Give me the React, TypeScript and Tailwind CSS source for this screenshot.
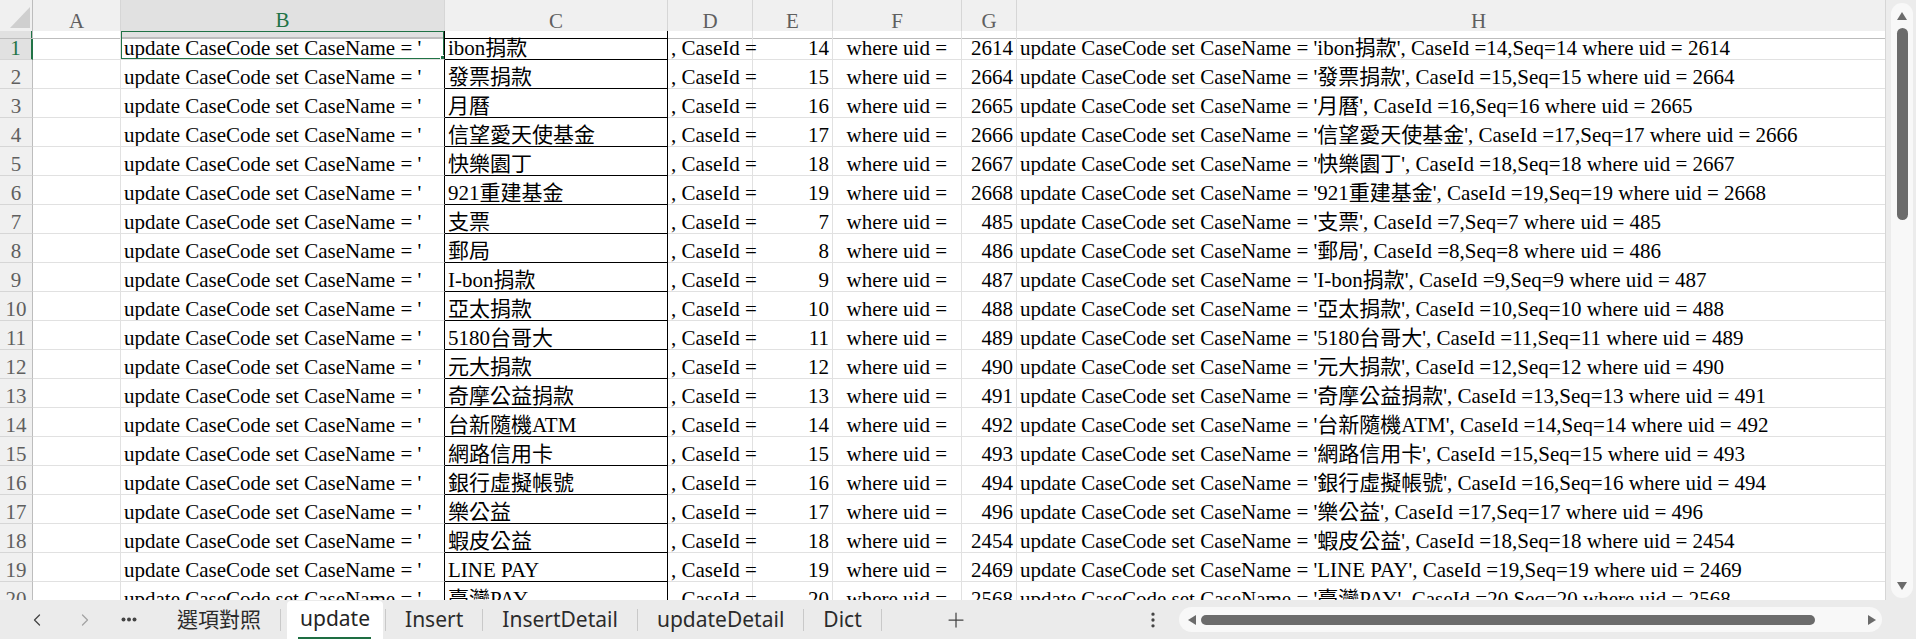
import React from "react";
import { ChevronLeft, ChevronRight, Plus, EllipsisVertical } from "lucide-react";

const data: [string, number, number][] = [
  ["ibon捐款", 14, 2614],
  ["發票捐款", 15, 2664],
  ["月曆", 16, 2665],
  ["信望愛天使基金", 17, 2666],
  ["快樂園丁", 18, 2667],
  ["921重建基金", 19, 2668],
  ["支票", 7, 485],
  ["郵局", 8, 486],
  ["I-bon捐款", 9, 487],
  ["亞太捐款", 10, 488],
  ["5180台哥大", 11, 489],
  ["元大捐款", 12, 490],
  ["奇摩公益捐款", 13, 491],
  ["台新隨機ATM", 14, 492],
  ["網路信用卡", 15, 493],
  ["銀行虛擬帳號", 16, 494],
  ["樂公益", 17, 496],
  ["蝦皮公益", 18, 2454],
  ["LINE PAY", 19, 2469],
  ["臺灣PAY", 20, 2568],
];

const GRID = "grid grid-cols-[33px_88px_324px_223px_85px_80px_129px_55px_924px]";
const BASE = "flex items-end whitespace-pre border-r border-b border-[#e1e1e1] leading-[22px] px-[3px]";
const CELL = `${BASE} overflow-hidden`;
const HEAD = "flex items-center justify-center border-r border-b border-r-[#d6d6d6] border-b-[#bdbdbd] pt-[5px] text-[#5f5f5f]";

function SheetTab({ label, active }: { label: string; active?: boolean }) {
  return (
    <div className={active ? "relative h-full flex items-center px-[13px] ml-[6px] mr-[2px] bg-white rounded-t-[4px] mt-[2px]" : "h-full flex items-center px-[19px]"}>
      <span className={active ? "text-[#242424] -mt-[4px]" : "text-[#2b2b2b]"}>{label}</span>
      {active && <div className="absolute bottom-0 left-[11px] right-[12px] h-[3px] bg-[#1e6e42]" />}
    </div>
  );
}

function Sep() {
  return <div className="w-px h-[22px] bg-[#c9c9c9]" />;
}

export default function App() {
  return (
    <div className="w-[1916px] h-[639px] overflow-hidden bg-[#ececec] flex flex-col" style={{ fontFamily: '"Liberation Serif", "Noto Sans CJK TC", serif' }}>
      <div className="h-[600px] flex">
        <div className="w-[1886px] overflow-hidden bg-white border-r border-[#d6d6d6] text-[21px] text-black">
          {/* header */}
          <div className={`${GRID} h-[31px] bg-[#f0f0f0]`}>
            <div className="relative border-r border-b border-r-[#bdbdbd] border-b-[#bdbdbd]">
              <svg className="absolute left-[10px] top-[7px]" width="20" height="21" viewBox="0 0 20 21">
                <polygon points="20,0 20,21 0,21" fill="#cfcfcf" />
              </svg>
            </div>
            <div className={HEAD}>A</div>
            <div className={`${HEAD} bg-[#e1e1e1] text-[#217346] border-b-2 border-b-[#217346]`}>B</div>
            <div className={`${HEAD} border-b-black`}>C</div>
            <div className={HEAD}>D</div>
            <div className={HEAD}>E</div>
            <div className={HEAD}>F</div>
            <div className={HEAD}>G</div>
            <div className={HEAD}>H</div>
          </div>
          {data.map(([name, id, uid], i) => {
            const first = i === 0;
            return (
              <div key={i} className={`${GRID} h-[29px]`}>
                <div className={`flex items-end justify-center leading-[22px] border-b border-b-[#d6d6d6] text-[#5f5f5f] ${first ? "bg-[#e1e1e1] text-[#217346] border-r-2 border-r-[#217346]" : "bg-[#f0f0f0] border-r border-r-[#bdbdbd]"}`}>
                  {i + 1}
                </div>
                <div className={CELL}></div>
                <div className={`${CELL} relative border-r-black`}>
                  {"update CaseCode set CaseName = '"}
                  {first && (
                    <>
                      <div className="absolute left-[-1px] top-[-1px] right-[-1px] bottom-[-1px] border-2 border-[#217346]" />
                      <div className="absolute right-[-3px] bottom-[-3px] w-[7px] h-[7px] bg-[#217346] border border-white" />
                    </>
                  )}
                </div>
                <div className={`${CELL} border-r-black border-b-black`}>{name}</div>
                <div className={`${BASE} relative z-10`}>{", CaseId ="}</div>
                <div className={`${CELL} justify-end`}>{id}</div>
                <div className={CELL}>{"  where uid ="}</div>
                <div className={`${CELL} justify-end`}>{uid}</div>
                <div className={CELL}>{`update CaseCode set CaseName = '${name}', CaseId =${id},Seq=${id} where uid = ${uid}`}</div>
              </div>
            );
          })}
        </div>
        {/* vertical scrollbar */}
        <div className="w-[30px] h-full pl-[5px] pt-[3px] pb-[2px]">
          <div className="w-[22px] h-full rounded-full bg-[#f8f8f8] flex flex-col items-center">
            <svg className="mt-[9px]" width="10" height="8" viewBox="0 0 10 8">
              <polygon points="5,0 10,8 0,8" fill="#6b6b6b" />
            </svg>
            <div className="mt-[8px] w-[11px] h-[192px] rounded-full bg-[#6b6b6b]" />
            <div className="flex-1" />
            <svg className="mb-[8px]" width="10" height="8" viewBox="0 0 10 8">
              <polygon points="0,0 10,0 5,8" fill="#6b6b6b" />
            </svg>
          </div>
        </div>
      </div>
      {/* bottom bar */}
      <div className="h-[39px] flex items-center bg-[#ebebeb] text-[21px]" style={{ fontFamily: '"Noto Sans", "Noto Sans CJK TC", sans-serif' }}>
        <div className="w-[13px]" />
        <div className="w-[48px] flex justify-center text-[#444]"><ChevronLeft size={20} strokeWidth={1.5} /></div>
        <div className="w-[48px] flex justify-center text-[#a3a3a3]"><ChevronRight size={20} strokeWidth={1.5} /></div>
        <div className="w-[40px] flex justify-center">
          <svg width="16" height="5" viewBox="0 0 16 5">
            <circle cx="2.5" cy="2.5" r="2" fill="#444" />
            <circle cx="8" cy="2.5" r="2" fill="#444" />
            <circle cx="13.5" cy="2.5" r="2" fill="#444" />
          </svg>
        </div>
        <div className="w-[9px]" />
        <SheetTab label="選項對照" />
        <Sep />
        <SheetTab label="update" active />
        <Sep />
        <SheetTab label="Insert" />
        <Sep />
        <SheetTab label="InsertDetail" />
        <Sep />
        <SheetTab label="updateDetail" />
        <Sep />
        <SheetTab label="Dict" />
        <Sep />
        <div className="ml-[54px] w-[40px] flex justify-center text-[#444]"><Plus size={24} strokeWidth={1.25} /></div>
        <div className="flex-1" />
        <div className="w-[24px] flex justify-center text-[#444]"><EllipsisVertical size={20} strokeWidth={2} /></div>
        <div className="ml-[14px] w-[703px] h-[25px] rounded-full bg-[#f8f8f8] flex items-center pl-[9px] pr-[6px]">
          <svg width="8" height="10" viewBox="0 0 8 10">
            <polygon points="8,0 8,10 0,5" fill="#6b6b6b" />
          </svg>
          <div className="ml-[5px] w-[614px] h-[10px] rounded-full bg-[#6b6b6b]" />
          <div className="flex-1" />
          <svg width="8" height="10" viewBox="0 0 8 10">
            <polygon points="0,0 8,5 0,10" fill="#6b6b6b" />
          </svg>
        </div>
        <div className="w-[34px]" />
      </div>
    </div>
  );
}
